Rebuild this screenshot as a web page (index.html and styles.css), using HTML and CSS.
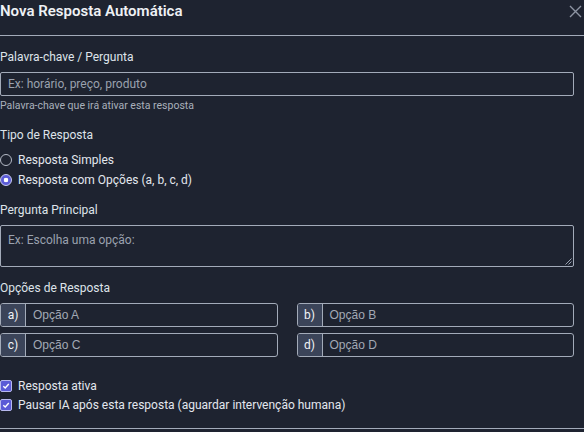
FILE: index.html
```html
<!DOCTYPE html>
<html lang="pt">
<head>
<meta charset="utf-8">
<link rel="stylesheet" href="styles.css">
</head>
<body>
<div class="modal">
  <div class="header">
    <h2 class="title">Nova Resposta Automática</h2>
    <button class="close" aria-label="Fechar">
      <svg width="13" height="13" viewBox="0 0 13 13"><path d="M1 1L12 12M12 1L1 12" stroke="#8d94a3" stroke-width="1.4" fill="none"/></svg>
    </button>
  </div>
  <div class="content">
    <div class="field">
      <label class="label">Palavra-chave / Pergunta</label>
      <div class="input"><span class="ph">Ex: horário, preço, produto</span></div>
      <div class="help">Palavra-chave que irá ativar esta resposta</div>
    </div>

    <div class="field">
      <label class="label">Tipo de Resposta</label>
      <div class="choices">
        <div class="choice"><span class="radio"></span><span>Resposta Simples</span></div>
        <div class="choice"><span class="radio on"></span><span>Resposta com Opções (a, b, c, d)</span></div>
      </div>
    </div>

    <div class="field">
      <label class="label">Pergunta Principal</label>
      <div class="textarea"><span class="ph">Ex: Escolha uma opção:</span>
        <svg class="grip" width="7" height="7" viewBox="0 0 7 7"><path d="M0.5 6.5L6.5 0.5M3.5 6.5L6.5 3.5" stroke="#9aa2b1" stroke-width="1" fill="none"/></svg>
      </div>
    </div>

    <div class="field">
      <label class="label">Opções de Resposta</label>
      <div class="options">
        <div class="opt"><span class="pre">a)</span><span class="oph">Opção A</span></div>
        <div class="opt"><span class="pre">b)</span><span class="oph">Opção B</span></div>
        <div class="opt"><span class="pre">c)</span><span class="oph">Opção C</span></div>
        <div class="opt"><span class="pre">d)</span><span class="oph">Opção D</span></div>
      </div>
    </div>

    <div class="checks">
      <div class="choice"><span class="check"><svg width="8" height="8" viewBox="0 0 8 8"><path d="M1.3 4.2L3.2 6L6.8 2" stroke="#fff" stroke-width="1.4" fill="none"/></svg></span><span>Resposta ativa</span></div>
      <div class="choice"><span class="check"><svg width="8" height="8" viewBox="0 0 8 8"><path d="M1.3 4.2L3.2 6L6.8 2" stroke="#fff" stroke-width="1.4" fill="none"/></svg></span><span>Pausar IA após esta resposta (aguardar intervenção humana)</span></div>
    </div>
  </div>
  <div class="footer"></div>
</div>
</body>
</html>
```

FILE: styles.css
```css
* { box-sizing: border-box; }
html, body {
  margin: 0;
  background: #1e2330;
}
body {
  font-family: Roboto, "Noto Sans", sans-serif;
  color: #e3e7ee;
  width: 584px;
  height: 432px;
  overflow: hidden;
}
.modal {
  width: 584px;
}
.header {
  height: 36px;
  border-bottom: 1px solid #a3abb9;
  display: flex;
  justify-content: space-between;
  align-items: flex-start;
}
.title {
  margin: 0;
  font-size: 15px;
  line-height: 22px;
  font-weight: 600;
  color: #eef1f5;
}
.close {
  background: none;
  border: 0;
  padding: 0;
  margin: 5px 2px 0 0;
  width: 13px;
  height: 13px;
  display: flex;
}
.content {
  padding: 13px 10px 0 0;
  display: flex;
  flex-direction: column;
}
.field {
  display: flex;
  flex-direction: column;
}
.label {
  font-size: 12px;
  line-height: 16px;
  color: #dfe3ea;
}
.input {
  margin-top: 7px;
  height: 24px;
  border: 1px solid #a3abb9;
  border-radius: 2px;
  padding: 0 7px;
  display: flex;
  align-items: center;
}
.ph {
  font-size: 12px;
  color: #9aa1ae;
}
.help {
  margin-top: 3px;
  font-size: 10.5px;
  line-height: 14px;
  color: #a9b0bc;
  margin-bottom: 14px;
}
.choices {
  margin-top: 7px;
  display: flex;
  flex-direction: column;
  margin-bottom: 12px;
}
.choice {
  height: 20px;
  display: flex;
  align-items: center;
  gap: 6px;
  font-size: 12px;
  color: #e3e7ee;
}
.radio {
  width: 12px;
  height: 12px;
  border-radius: 50%;
  border: 1px solid #b4bac6;
  flex: none;
}
.radio.on {
  border: 1px solid #c9ccf3;
  background: radial-gradient(circle, #ffffff 0 2px, #5b5bd6 2.6px);
}
.textarea {
  position: relative;
  margin-top: 7px;
  height: 42px;
  border: 1px solid #a3abb9;
  border-radius: 2px;
  padding: 3px 7px;
  margin-bottom: 13px;
}
.textarea .ph { line-height: 16px; }
.grip {
  position: absolute;
  right: 1px;
  bottom: 1px;
}
.options {
  margin-top: 7px;
  display: grid;
  grid-template-columns: 1fr 1fr;
  column-gap: 19px;
  row-gap: 6px;
}
.opt {
  height: 24px;
  border: 1px solid #a3abb9;
  border-radius: 3px;
  display: flex;
  overflow: hidden;
}
.pre {
  width: 25px;
  background: #3b4459;
  border-right: 1px solid #a3abb9;
  display: flex;
  align-items: center;
  justify-content: center;
  font-size: 12px;
  color: #f1f3f7;
}
.oph {
  padding-left: 7px;
  display: flex;
  align-items: center;
  font-family: "Liberation Sans", Arial, sans-serif;
  font-size: 12px;
  color: #a2a9b5;
}
.checks {
  margin-top: 19px;
  display: flex;
  flex-direction: column;
}
.checks .choice { height: 19px; }
.check {
  width: 12px;
  height: 12px;
  border-radius: 2px;
  background: #5b5bd6;
  border: 1px solid #b7b9ee;
  display: flex;
  align-items: center;
  justify-content: center;
  flex: none;
}
.footer {
  margin-top: 14px;
  border-top: 1px solid #a3abb9;
}
```
